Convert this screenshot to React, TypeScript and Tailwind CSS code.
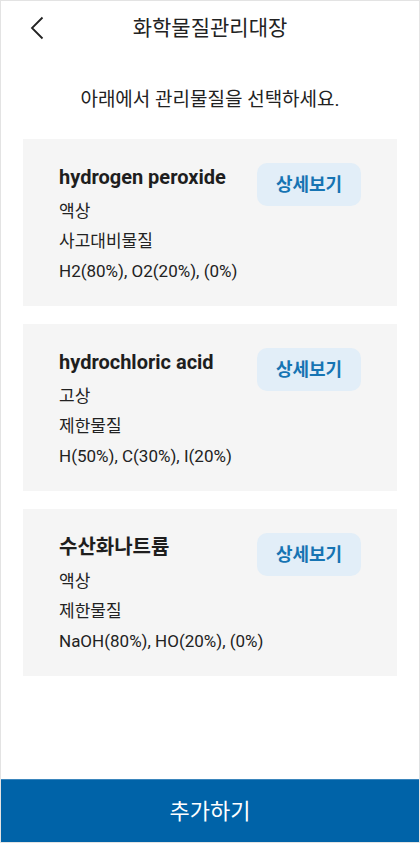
import React from 'react';

const chemicals = [
  { id: 1, name: 'hydrogen peroxide', state: '액상', type: '사고대비물질', parts: 'H2(80%), O2(20%), (0%)' },
  { id: 2, name: 'hydrochloric acid', state: '고상', type: '제한물질', parts: 'H(50%), C(30%), I(20%)' },
  { id: 3, name: '수산화나트륨', state: '액상', type: '제한물질', parts: 'NaOH(80%), HO(20%), (0%)' },
];

function App() {
  return (
    <div
      className="w-[420px] h-[843px] flex flex-col bg-white border border-[#e3e3e3] text-[#222]"
      style={{ fontFamily: 'Roboto, "Noto Sans CJK KR", sans-serif' }}
    >
      {/* header */}
      <div className="relative h-[56px] flex items-center justify-center">
        <button className="absolute left-[24px] top-[14px] w-[24px] h-[26px] flex items-center justify-center">
          <svg width="14" height="24" viewBox="0 0 14 24" fill="none">
            <path d="M12.5 1.5 L2 12 L12.5 22.5" stroke="#222" strokeWidth="1.8" />
          </svg>
        </button>
        <div className="text-[21px] leading-[26px] mt-[-2px]">화학물질관리대장</div>
      </div>

      <div className="text-center text-[19px] leading-[26px] mt-[30px]">아래에서 관리물질을 선택하세요.</div>

      {/* list */}
      <div className="flex flex-col gap-[18px] mt-[26px] px-[22px]">
        {chemicals.map((c) => (
          <div key={c.id} className="bg-[#f5f5f5] h-[167px] pl-[36px] pr-[36px] pt-[26px] flex justify-between">
            <div className="flex flex-col flex-1 min-w-0 whitespace-nowrap">
              <div className="text-[20px] leading-[24px] font-bold text-[#1e1e1e]">{c.name}</div>
              <div className="mt-[7px] text-[17px] leading-[30px]">{c.state}</div>
              <div className="text-[17px] leading-[30px]">{c.type}</div>
              <div className="text-[17px] leading-[30px]">{c.parts}</div>
            </div>
            <button className="shrink-0 w-[104px] h-[43px] rounded-[10px] bg-[#e2eef8] text-[#1674b3] text-[18px] font-bold mt-[-2px]">
              상세보기
            </button>
          </div>
        ))}
      </div>

      <div className="flex-1" />

      {/* footer */}
      <button className="h-[63px] w-full bg-[#0063a8] border-t border-[#3b86bd] text-white text-[22px]">
        추가하기
      </button>
    </div>
  );
}

export default App;
